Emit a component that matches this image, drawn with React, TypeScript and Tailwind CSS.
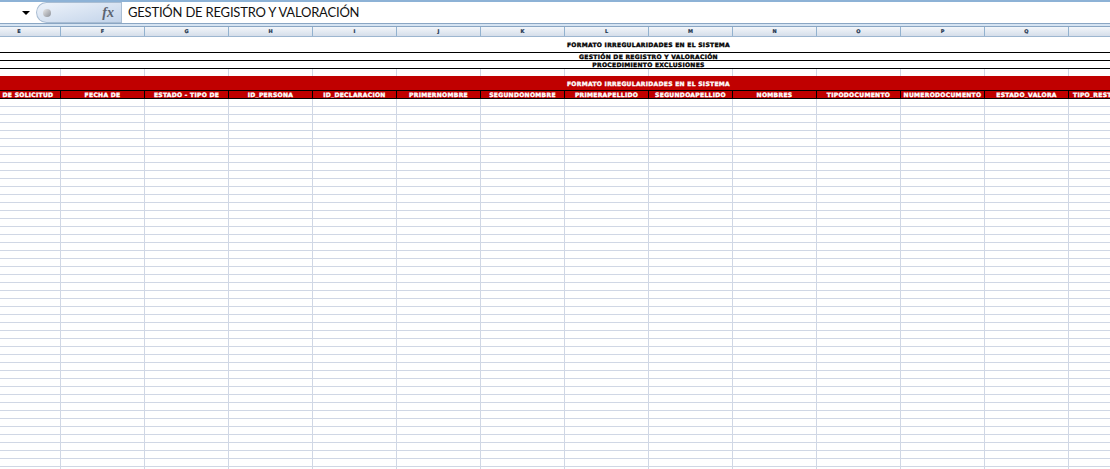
import React from 'react';

const columns = ['E', 'F', 'G', 'H', 'I', 'J', 'K', 'L', 'M', 'N', 'O', 'P', 'Q', ''];

const fields = [
  'DE SOLICITUD',
  'FECHA DE',
  'ESTADO - TIPO DE',
  'ID_PERSONA',
  'ID_DECLARACION',
  'PRIMERNOMBRE',
  'SEGUNDONOMBRE',
  'PRIMERAPELLIDO',
  'SEGUNDOAPELLIDO',
  'NOMBRES',
  'TIPODOCUMENTO',
  'NUMERODOCUMENTO',
  'ESTADO_VALORA',
  'TIPO_RESTRICCION',
];

const widthFor = (i: number) => {
  if (i === 0) return 'w-[61px]';
  if (i === 13) return 'w-[42px]';
  return 'w-[84px]';
};

// the sheet uses a chunky display font, stroke thickens it at this tiny size
const blockText =
  "font-['DejaVu_Sans',sans-serif] text-[6px] font-bold tracking-[0.3px] whitespace-nowrap [-webkit-text-stroke:0.35px_currentColor]";

const TitleRow = ({ text, height }: { text: string; height: string }) => (
  <div className={`flex shrink-0 ${height} items-center justify-center border-b border-black bg-white pl-[187px] text-black ${blockText}`}>
    {text}
  </div>
);

const App: React.FC = () => {
  const rows = Array.from({ length: 47 });

  return (
    <div className="flex h-[469px] w-[1110px] flex-col overflow-hidden bg-white">
      {/* formula bar */}
      <div className="flex h-[23px] shrink-0 border-t-2 border-[#8db2d6] bg-white">
        <div className="flex w-[36px] items-center justify-end pr-[6px]">
          <div className="h-0 w-0 border-x-[4px] border-t-[4px] border-x-transparent border-t-black" />
        </div>
        <div className="flex w-[85px] items-center justify-between rounded-l-[11px] border-y border-l border-[#a9bdd3] bg-gradient-to-br from-[#eef3fa] to-[#c3d4ea] pl-[6px] pr-[7px]">
          <div className="h-[8px] w-[8px] rounded-full bg-gradient-to-br from-[#e8e8e8] to-[#8c9098]" />
          <span className="font-['Liberation_Serif',serif] text-[14px] font-bold italic leading-none text-[#5c6470]">fx</span>
        </div>
        <div className="flex flex-1 items-center border-l border-[#a9bdd3] pl-[6px] pt-[1px] font-['Lato',sans-serif] text-[13px] tracking-[-0.2px] text-[#111]">
          GESTIÓN DE REGISTRO Y VALORACIÓN
        </div>
      </div>

      {/* gap above the sheet */}
      <div className="h-[4px] shrink-0 border-y border-[#8aa6c4] bg-[#d6e4f2]" />

      {/* column letters */}
      <div className="flex h-[10px] shrink-0 border-b border-[#9db6d0] bg-gradient-to-b from-[#f3f6fa] to-[#d5deea]">
        {columns.map((col, i) => (
          <div
            key={i}
            className={`flex shrink-0 items-center justify-center border-r border-[#93b2cf] font-['DejaVu_Sans',sans-serif] text-[5px] font-bold text-[#1f3650] [-webkit-text-stroke:0.2px_currentColor] ${i === 0 ? 'pr-[22px]' : ''} ${widthFor(i)}`}
          >
            {col}
          </div>
        ))}
      </div>

      {/* merged title rows */}
      <TitleRow text="FORMATO IRREGULARIDADES EN EL SISTEMA" height="h-[16px]" />
      <TitleRow text="GESTIÓN DE REGISTRO Y VALORACIÓN" height="h-[8px]" />
      <TitleRow text="PROCEDIMIENTO EXCLUSIONES" height="h-[8px]" />

      <div className="flex h-[7px] shrink-0">
        {columns.map((_, i) => (
          <div key={i} className={`shrink-0 border-r border-[#d0d7e5] ${widthFor(i)}`} />
        ))}
      </div>

      {/* red table head */}
      <div className={`flex h-[14px] shrink-0 items-center justify-center bg-[#c00000] pl-[187px] text-white ${blockText}`}>
        FORMATO IRREGULARIDADES EN EL SISTEMA
      </div>
      <div className="flex h-[9px] shrink-0 border-y border-black bg-[#c00000]">
        {fields.map((field, i) => (
          <div
            key={field}
            className={`flex shrink-0 items-center overflow-hidden border-r border-black text-white ${i === 13 ? 'justify-start pl-[4px]' : 'justify-center'} ${i === 0 ? 'pr-[4px]' : ''} ${blockText} ${widthFor(i)}`}
          >
            {field}
          </div>
        ))}
      </div>

      {/* empty grid */}
      {rows.map((_, r) => (
        <div key={r} className="flex h-[8px] shrink-0 border-b border-[#d0d7e5]">
          {columns.map((_, i) => (
            <div key={i} className={`shrink-0 border-r border-[#d0d7e5] ${widthFor(i)}`} />
          ))}
        </div>
      ))}
    </div>
  );
};

export default App;
